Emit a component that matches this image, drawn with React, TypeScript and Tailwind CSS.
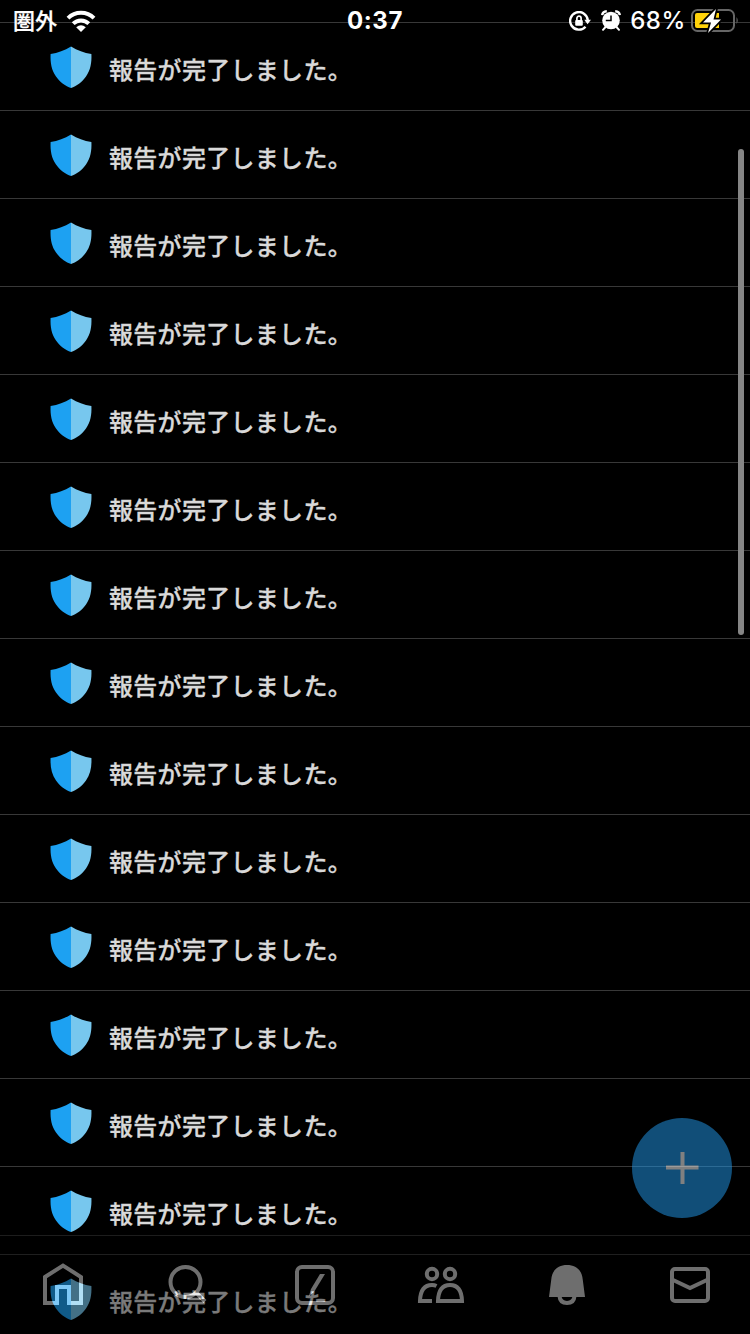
import React from "react";

const ROW_COUNT = 15;

const Shield: React.FC = () => (
  <svg width="42" height="42" viewBox="0 0 42 42" className="shrink-0">
    <path d="M21 .5C14.500 4.500 8 6.800 .6 8C.2 17 1.500 24 6 30.500C10 36.200 15.500 40.300 21 42Z" fill="#1da1f2" />
    <path d="M21 .5C27.500 4.500 34 6.800 41.400 8C41.800 17 40.500 24 36 30.500C32 36.200 26.500 40.300 21 42Z" fill="#77c7ee" />
  </svg>
);

const ReportRow: React.FC = () => (
  <li className="flex h-[88px] shrink-0 items-start border-b border-[#383838] pt-[23px] pl-[50px]">
    <Shield />
    <p className="mt-[6px] ml-[17px] text-[24px] leading-[34px] font-medium tracking-[0.3px] whitespace-nowrap text-[#d9d9d9] [-webkit-text-stroke:0.3px_#d9d9d9]">
      報告が完了しました。
    </p>
  </li>
);

const StatusBar: React.FC = () => (
  <header className="absolute inset-x-0 top-0 grid h-10 grid-cols-3 items-center text-white">
    <div className="flex items-center pl-[13px]">
      <span className="-mt-[4px] text-[22px] leading-10 font-medium [-webkit-text-stroke:0.25px_#fff]">圏外</span>
      <svg width="30" height="22" viewBox="0 0 30 22" className="ml-[9px]" fill="none" stroke="#fff" strokeWidth="4">
        <path d="M2 8.200A18.500 18.500 0 0 1 28 8.200" />
        <path d="M7.200 13.700A11 11 0 0 1 22.800 13.700" />
        <path d="M10.200 17.200Q15 13.200 19.800 17.200L15 22Z" fill="#fff" stroke="none" />
      </svg>
    </div>
    <span className="pt-px text-center font-['Inter','Liberation_Sans',sans-serif] text-[24px] leading-10 font-bold tracking-[0.6px]">
      0:37
    </span>
    <div className="flex items-center justify-end pr-[11px]">
      <svg width="22" height="20" viewBox="0 0 22 20" fill="none" stroke="#fff" strokeWidth="2.400">
        <path d="M16.500 15.700A8.800 8.800 0 1 1 18.700 9" />
        <path d="M15.300 8.800H22L18.500 13.200Z" fill="#fff" stroke="none" />
        <rect x="6.200" y="9" width="7.600" height="5.800" rx="1" fill="#fff" stroke="none" />
        <path d="M7.900 9V7.300A2.100 2.100 0 0 1 12.100 7.300V9" strokeWidth="1.700" />
      </svg>
      <svg width="20" height="21" viewBox="0 0 20 21" className="ml-[10px]" fill="none" stroke="#fff">
        <circle cx="10" cy="10.500" r="8.800" fill="#fff" stroke="none" />
        <path d="M1.200 5.200Q1.500 1.500 5.800 1.200M18.800 5.200Q18.500 1.500 14.200 1.200" strokeWidth="2.400" />
        <path d="M4.500 17L2 19.800M15.500 17L18 19.800" strokeWidth="2" strokeLinecap="round" />
        <path d="M10 5.500V10.500H4.800" stroke="#000" strokeWidth="1.500" />
      </svg>
      <span className="ml-[9px] pt-px font-['Inter','Liberation_Sans',sans-serif] text-[24px] leading-10 font-medium tracking-[0.6px]">
        68%
      </span>
      <svg width="48" height="26" viewBox="0 0 48 26" className="ml-[5px]">
        <rect x="1" y="2" width="42" height="21" rx="5.500" fill="none" stroke="#666" strokeWidth="2" />
        <path d="M45.500 9Q48 12.500 45.500 16Z" fill="#666" />
        <path d="M6 5H28V20H6Q4 20 4 18V7Q4 5 6 5Z" fill="#ffd20a" />
        <path d="M25 1L12 14.500H20L17 25L30 11.500H22.500Z" fill="#fff" stroke="#000" strokeWidth="3.500" />
        <path d="M25 1L12 14.500H20L17 25L30 11.500H22.500Z" fill="#fff" />
      </svg>
    </div>
  </header>
);

// Half-transparent, so the list keeps showing through the bar
const TabBar: React.FC = () => (
  <nav className="absolute inset-x-0 bottom-0 flex h-[99px] items-start border-t border-[#444] bg-black pt-[27px] pl-[42px] opacity-[0.43]">
    <svg width="42" height="44" viewBox="0 0 42 44" fill="none" stroke="#fff" strokeWidth="4">
      <path d="M3 14L21 2.500L39 14V40H27V24H15V40H3Z" />
    </svg>
    <svg width="42" height="44" viewBox="0 0 42 44" className="ml-[83px]" fill="none" stroke="#fff" strokeWidth="4">
      <circle cx="18.500" cy="19" r="15" />
      <path d="M29 29.500L38 38.500" />
    </svg>
    <svg width="42" height="44" viewBox="0 0 42 44" className="ml-[85px]" fill="none" stroke="#fff" strokeWidth="4">
      <rect x="3" y="4" width="36" height="36" rx="5" />
      <path d="M26 11H31L20 29L15 33L17 26Z" fill="#fff" stroke="none" />
    </svg>
    <svg width="48" height="44" viewBox="0 0 48 44" className="ml-[81px]" fill="none" stroke="#fff" strokeWidth="4">
      <circle cx="15" cy="11" r="5.200" />
      <circle cx="33" cy="11" r="5.200" />
      <path d="M15 38H3Q3.500 22 15 22Q17.500 22 19.500 23" />
      <path d="M21 38Q21.500 22 33 22T45 38Z" />
    </svg>
    <svg width="38" height="44" viewBox="0 0 38 44" className="ml-[83px]" fill="none" stroke="#fff" strokeWidth="4">
      <path d="M1 34L3.200 17C4 7 10 2 19 2S34 7 34.800 17L37 34Z" fill="#fff" stroke="none" />
      <path d="M13 34H25Q24 38 19 38T13 34Z" fill="#000" stroke="none" />
      <path d="M11.500 33Q12 40 19 40T26.500 33" />
    </svg>
    <svg width="42" height="44" viewBox="0 0 42 44" className="ml-[83px]" fill="none" stroke="#fff" strokeWidth="4">
      <rect x="3" y="6" width="36" height="32" rx="3" />
      <path d="M3 16.500L21 25L39 16.500" />
    </svg>
  </nav>
);

const App: React.FC = () => {
  return (
    <div className="relative h-[1334px] w-[750px] overflow-hidden bg-black font-['Noto_Sans_CJK_JP',sans-serif]">
      <ul className="flex flex-col">
        <li className="h-[23px] shrink-0 border-b border-[#383838]" />
        {Array.from({ length: ROW_COUNT }, (_, i) => (
          <ReportRow key={i} />
        ))}
      </ul>
      <StatusBar />
      <div className="absolute top-[149px] right-[6px] h-[486px] w-[6px] rounded-full bg-[#858585]" />
      <button className="absolute right-[18px] bottom-[116px] flex size-[100px] items-center justify-center rounded-full bg-[#229cf0] opacity-50">
        <svg width="34" height="34" viewBox="0 0 34 34" stroke="#fff" strokeWidth="4">
          <path d="M17.500 1V33M1 16.500H33.500" />
        </svg>
      </button>
      <TabBar />
    </div>
  );
};

export default App;
